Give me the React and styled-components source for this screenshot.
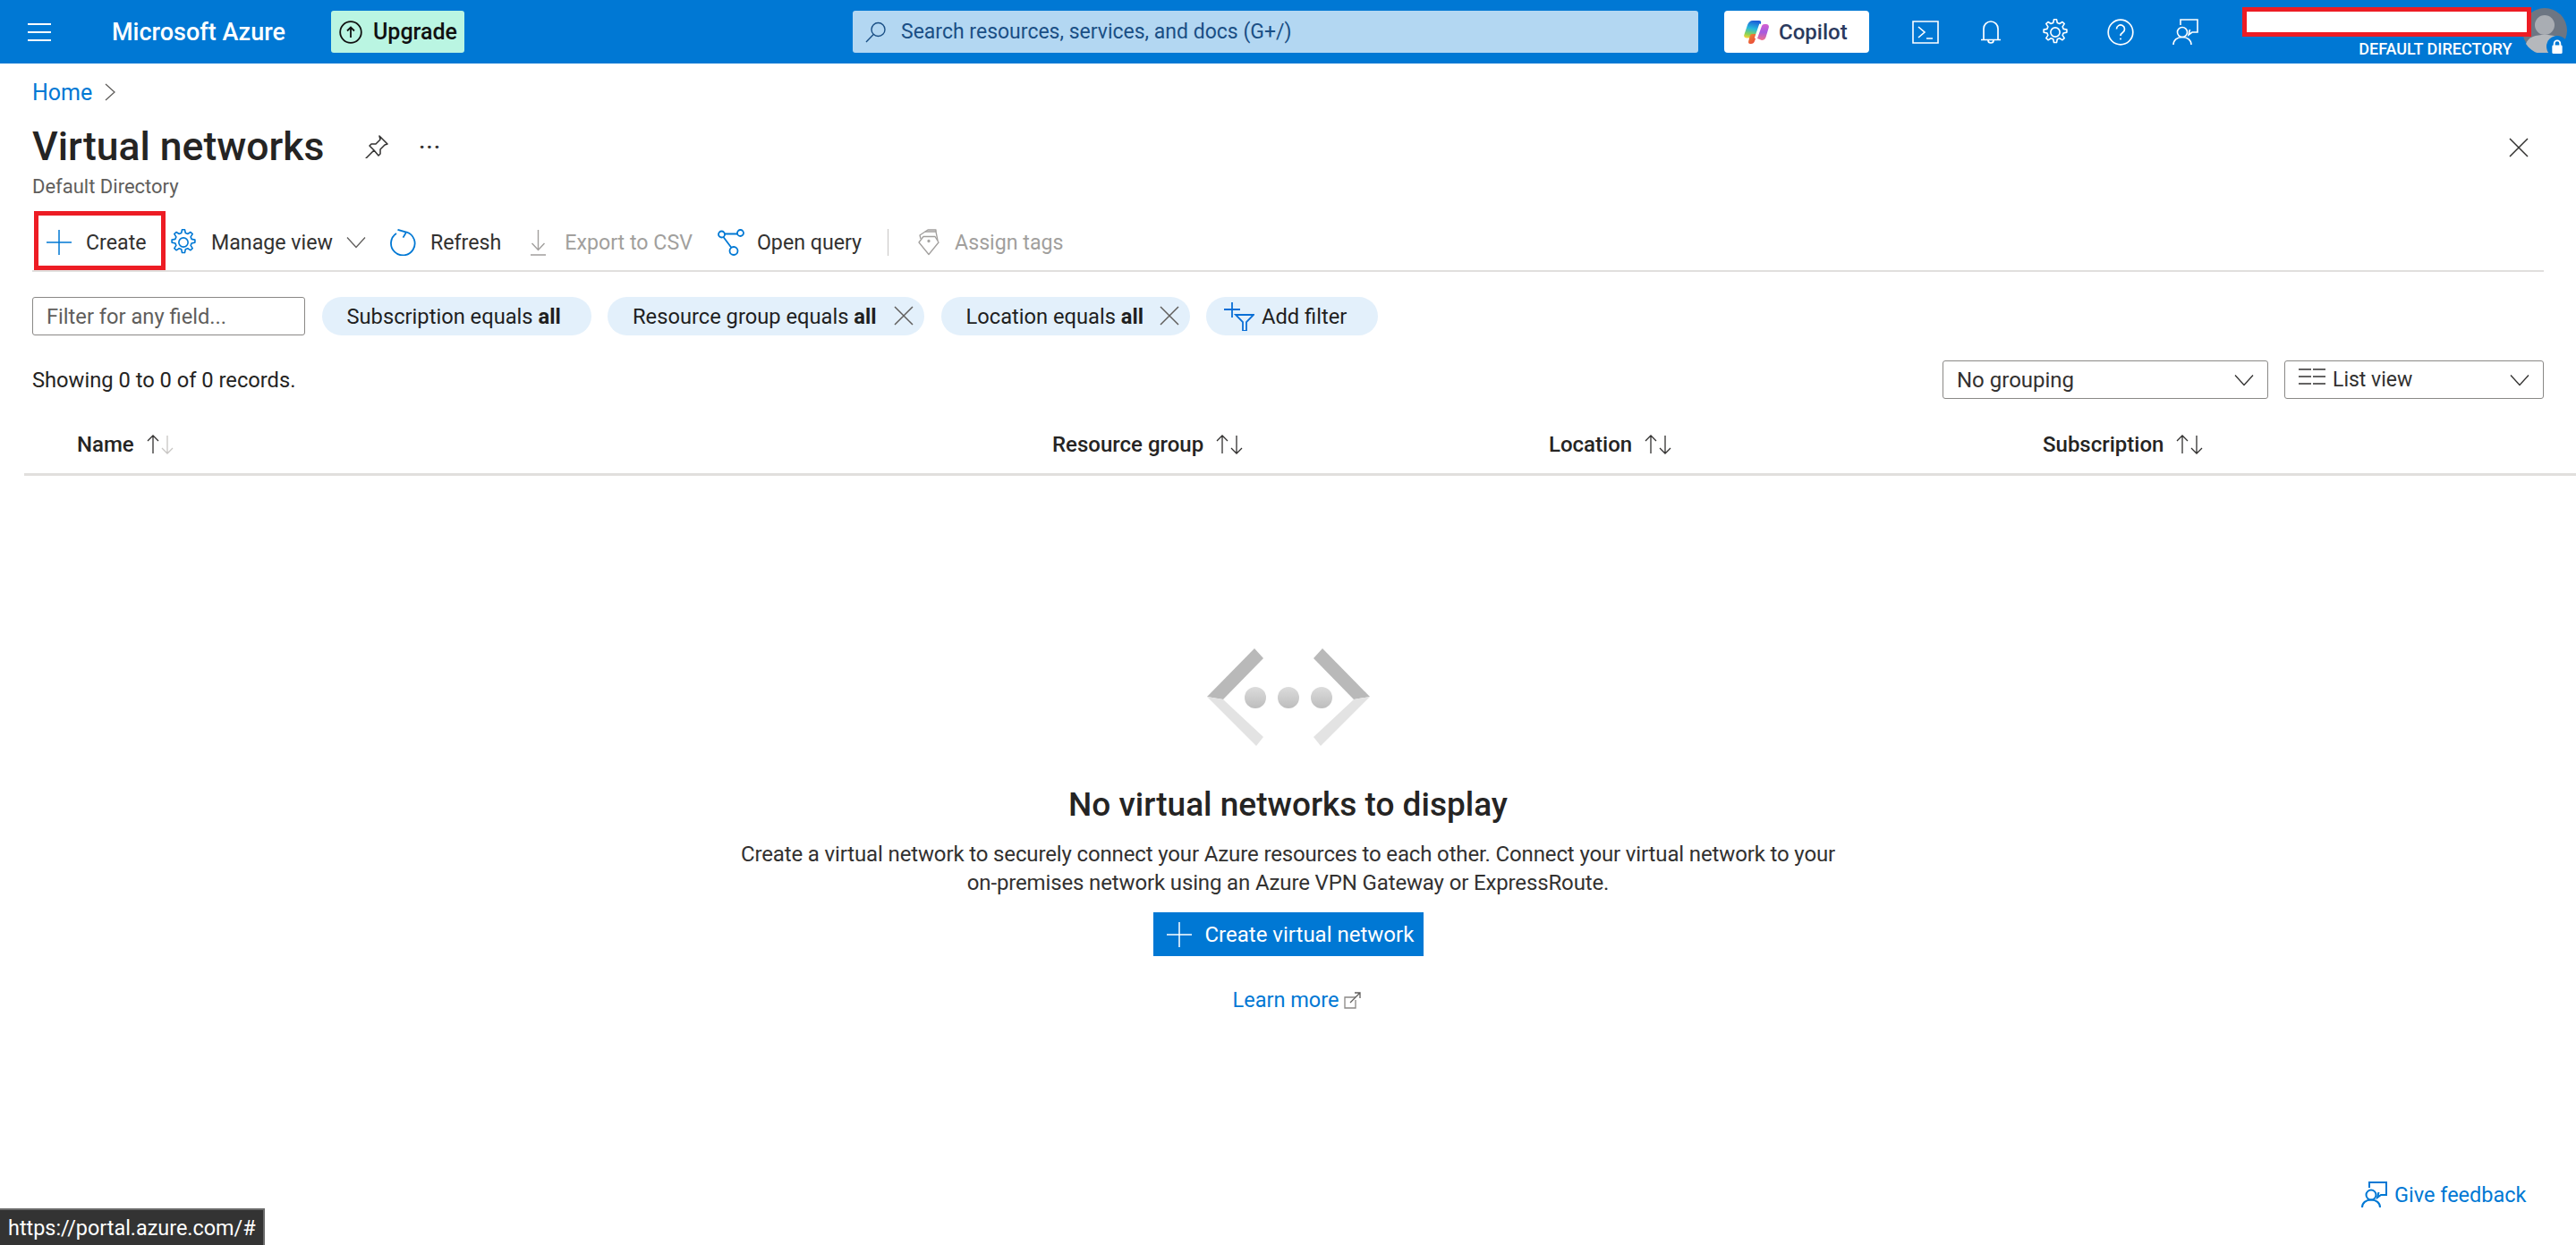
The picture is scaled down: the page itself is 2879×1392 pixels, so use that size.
import React from 'react';
import styled, {createGlobalStyle} from 'styled-components';

const FONT = 'Roboto, "Open Sans", "Liberation Sans", sans-serif';

const GlobalStyle = createGlobalStyle`
	html, body {
		margin: 0;
		padding: 0;
		background: #fff;
	}
	body {
		font-family: ${FONT};
		color: #323130;
	}
	* {
		box-sizing: border-box;
	}
`

function Line({children, w = 29, h = 29, box = 24, ...rest}) {
	return (
		<svg width={w} height={h} viewBox={`0 0 ${box} ${box}`} fill="none" stroke="currentColor" strokeWidth="1.2" {...rest}>
			{children}
		</svg>
	)
}

const Hamburger = () => (
	<Line w={28} h={28} box={28} strokeWidth="2.2"><path d="M1 5h26M1 14h26M1 23h26" /></Line>
)
const UpgradeIcon = () => (
	<Line w={26} h={26} box={26} strokeWidth="1.8"><circle cx="13" cy="13" r="11.8" /><path d="M13 19V8M9 11.5 13 7.5l4 4" /></Line>
)
const SearchIcon = () => (
	<Line w={24} h={24} box={24} strokeWidth="1.4"><circle cx="14.5" cy="9" r="7.5" /><path d="M9.2 14.5 1 23" /></Line>
)
const TerminalIcon = () => (
	<Line w={30} h={26} box={30} viewBox="0 0 30 26" strokeWidth="1.6"><path d="M1 1h28v24H1z" /><path d="M7 7l7 6-7 6M16 20h7" /></Line>
)
const BellIcon = () => (
	<Line w={24} h={28} viewBox="0 0 24 28" strokeWidth="1.7"><path d="M4 22V10a8 8 0 0 1 16 0v12M1 22.500h22M9 23a3 3 0 0 0 6 0" /></Line>
)
const GearPath = 'M12.700 1.500h2.600l.7 3.300 2.200.9 2.800-1.800 1.900 1.900-1.800 2.800.9 2.200 3.300.7v2.600l-3.300.7-.9 2.200 1.800 2.800-1.900 1.900-2.800-1.800-2.200.9-.7 3.300h-2.600l-.7-3.300-2.200-.9-2.800 1.800-1.900-1.900 1.800-2.800-.9-2.200-3.300-.7v-2.600l3.300-.7.9-2.200-1.800-2.800 1.900-1.900 2.800 1.800 2.200-.9z'
const GearIcon = ({size = 32}) => (
	<Line w={size} h={size} box={28} strokeWidth="1.4" strokeLinejoin="round"><path d={GearPath} /><circle cx="14" cy="14" r="4.500" /></Line>
)
const HelpIcon = () => (
	<Line w={30} h={30} box={30} strokeWidth="1.7"><circle cx="15" cy="15" r="13.800" /><path d="M10.500 11.500a4.500 4.500 0 1 1 7 3.700c-1.700 1.100-2.500 2-2.500 3.800" /><circle cx="15" cy="22.500" r="1" fill="currentColor" stroke="none" /></Line>
)
const FeedbackIcon = ({size = 29, weight = 1.6}) => (
	<Line w={size} h={size} box={29} strokeWidth={weight}><path d="M9 7V1h19v14h-6l-4 3 1.500-6" /><circle cx="11" cy="15" r="5.500" /><path d="M1 29c0-5 4-8.500 10-8.500S21 24 21 29" /></Line>
)
const PlusIcon = ({size = 28}) => (
	<Line w={size} h={size} box={28} strokeWidth="1.5"><path d="M14 0v28M0 14h28" /></Line>
)
const ChevronIcon = ({w = 22, h = 14}) => (
	<Line w={w} h={h} viewBox="0 0 22 14" strokeWidth="1.300"><path d="M1 1.500 11 12.500 21 1.500" /></Line>
)
const RefreshIcon = () => (
	<Line w={29} h={30} viewBox="0 0 29 30" strokeWidth="1.800"><path d="M18.500 3.500A13.300 13.300 0 1 1 7 5" /><path d="M8.500 0.800 18 3.600l-3.500 6" /></Line>
)
const ExportIcon = () => (
	<Line w={19} h={29} viewBox="0 0 19 29" strokeWidth="1.400"><path d="M9.500 0v22M2.500 15l7 7.500 7-7.500M1 28h17" /></Line>
)
const QueryIcon = () => (
	<Line w={30} h={30} box={30} strokeWidth="1.800"><circle cx="4.500" cy="6" r="3.500" /><circle cx="25.500" cy="4.500" r="3.500" /><circle cx="18" cy="24.500" r="4.500" /><path d="M8 5.500h14M6.500 9l9 12" /></Line>
)
const TagsIcon = () => (
	<Line w={24} h={30} viewBox="0 0 24 30" strokeWidth="1.300" strokeLinejoin="round">
		<path d="M1 15 12 28.500 23 15l-4-6.500H6z" />
		<path d="M3 11 2 7l6-4h12l2 10" />
		<path d="M8 3l3-2h9v2" />
		<circle cx="12" cy="13.500" r="1" />
	</Line>
)
const CloseIcon = ({size = 22}) => (
	<Line w={size} h={size} box={22} strokeWidth="1.500"><path d="M1 1l20 20M21 1 1 21" /></Line>
)
const PinIcon = () => (
	<Line w={26} h={26} box={26} strokeWidth="1.500" strokeLinejoin="round"><path d="M16 1l9 9-3 1-5 5 0 5-2 2-5-6-9 9 9-9-5-5 2-2h5l5-5z" /></Line>
)
const FilterAddIcon = () => (
	<svg width="34" height="32" viewBox="0 0 34 32" fill="none" stroke="#0a6fd6" strokeWidth="1.800">
		<path d="M9 0v17M0 8h18" />
		<path d="M13 14h20l-8 8v10h-4V22z" />
	</svg>
)
const ListIcon = () => (
	<svg width="30" height="18" viewBox="0 0 30 18" fill="none" stroke="#323130" strokeWidth="1.400">
		<path d="M0 1h14M16 1h14M0 9h14M16 9h14M0 17h14M16 17h14" />
	</svg>
)
const SortIcon = ({dim}) => (
	<svg width="30" height="24" viewBox="0 0 30 24" fill="none" strokeWidth="1.300">
		<path d="M7 22V2M1 8l6-6 6 6" stroke="#323130" />
		<path d="M23 2v20M17 16l6 6 6-6" stroke={dim ? '#c8c6c4' : '#323130'} />
	</svg>
)
const ExternalIcon = () => (
	<svg width="19" height="19" viewBox="0 0 19 19" fill="none" stroke="#8a8886" strokeWidth="1.300">
		<path d="M13 6H1v12h12V9" />
		<path d="M7 12 18 1M12 1h6v6" stroke="#605e5c" />
	</svg>
)
const CopilotIcon = () => (
	<svg width="28" height="26" viewBox="0 0 28 26">
		<defs>
			<linearGradient id="cpA" x1="0.500" y1="0" x2="0.300" y2="1">
				<stop offset="0" stopColor="#1b5fd8" />
				<stop offset="0.450" stopColor="#27b9dc" />
				<stop offset="0.800" stopColor="#8dd353" />
				<stop offset="1" stopColor="#f4d23a" />
			</linearGradient>
			<linearGradient id="cpB" x1="0.500" y1="0" x2="0.500" y2="1">
				<stop offset="0" stopColor="#d55fd0" />
				<stop offset="0.500" stopColor="#a55be0" />
				<stop offset="1" stopColor="#f0708a" />
			</linearGradient>
			<linearGradient id="cpC" x1="0" y1="0" x2="0.800" y2="1">
				<stop offset="0" stopColor="#f08a30" />
				<stop offset="1" stopColor="#e8413c" />
			</linearGradient>
		</defs>
		<path d="M10 0h7c2 0 2.500 1.500 2 3l-5 14c-.6 1.800-1.500 2.500-3 2.500H3c-2 0-3.300-1.500-2.700-3.500l3.700-11C5 2 7 0 10 0z" fill="url(#cpA)" />
		<path d="M15 20 20 6c.5-1.300 1.500-2 3-2h2c2 0 3.400 1.700 2.800 3.700l-3.300 11c-.8 2.300-2.500 3.300-4.500 3.300z" fill="url(#cpB)" />
		<path d="M9 15h6l-3 8c-.6 2-2 3-4 3H7c-1.500 0-2.300-1.300-1.800-3l1.300-5c.5-2 1.300-3 2.500-3z" fill="url(#cpC)" />
		<path d="M18.500 4 13 20" stroke="#fff" strokeWidth="2.500" fill="none" />
	</svg>
)
const EmptyIcon = () => (
	<svg width="182" height="109" viewBox="0 0 182 109">
		<defs>
			<linearGradient id="dotFill" x1="0" y1="0" x2="0" y2="1">
				<stop offset="0" stopColor="#dcdcdc" />
				<stop offset="1" stopColor="#bdbdbd" />
			</linearGradient>
		</defs>
		<path d="M53 0 63 11 18 57 0 54z" fill="#b9b9b9" />
		<path d="M129 0 119 11 164 57 182 54z" fill="#b9b9b9" />
		<path d="M0 54 18 57 63 99 55 109z" fill="#e3e3e3" />
		<path d="M182 54 164 57 119 99 127 109z" fill="#e3e3e3" />
		<ellipse cx="54" cy="55" rx="12" ry="12" fill="url(#dotFill)" />
		<ellipse cx="91" cy="55" rx="12" ry="12" fill="url(#dotFill)" />
		<ellipse cx="128" cy="55" rx="12" ry="12" fill="url(#dotFill)" />
	</svg>
)

function App() {
	return (
		<Page>
			<GlobalStyle />
			<TopBar>
				<TopLeft>
					<MenuButton><Hamburger /></MenuButton>
					<Brand>Microsoft Azure</Brand>
					<UpgradeButton><UpgradeIcon />Upgrade</UpgradeButton>
				</TopLeft>
				<SearchBox><SearchIcon /><span>Search resources, services, and docs (G+/)</span></SearchBox>
				<CopilotButton><CopilotIcon />Copilot</CopilotButton>
				<TopIcons>
					<TopIcon><TerminalIcon /></TopIcon>
					<TopIcon><BellIcon /></TopIcon>
					<TopIcon><GearIcon /></TopIcon>
					<TopIcon><HelpIcon /></TopIcon>
					<TopIcon><FeedbackIcon /></TopIcon>
				</TopIcons>
				<Account>
					<AccountText>
						<RedactBox />
						<DirectoryName>DEFAULT DIRECTORY</DirectoryName>
					</AccountText>
					<Avatar>
						<svg width="50" height="50" viewBox="0 0 50 50">
							<circle cx="25" cy="25" r="25" fill="#6d7683" />
							<circle cx="25" cy="19" r="11" fill="#a9adb3" />
							<path d="M4 40c3-8 11-10 21-10s18 2 21 10a25 25 0 0 1-42 0z" fill="#b5b8bc" />
						</svg>
						<LockBadge>
							<svg width="14" height="17" viewBox="0 0 14 18" fill="#fff">
								<path d="M3.500 8V5a3.500 3.500 0 0 1 7 0v3" fill="none" stroke="#fff" strokeWidth="2" />
								<rect x="1" y="7" width="12" height="10" rx="1.500" />
							</svg>
						</LockBadge>
					</Avatar>
				</Account>
			</TopBar>

			<Content>
				<Breadcrumb>
					<HomeLink>Home</HomeLink>
					<svg width="12" height="20" viewBox="0 0 12 20" fill="none" stroke="#605e5c" strokeWidth="1.300"><path d="M1 1l10 9-10 9" /></svg>
				</Breadcrumb>

				<TitleRow>
					<Title>Virtual networks</Title>
					<PinButton><PinIcon /></PinButton>
					<Dots>···</Dots>
					<CloseButton><CloseIcon /></CloseButton>
				</TitleRow>
				<SubTitle>Default Directory</SubTitle>

				<Toolbar>
					<CreateAction><Blue><PlusIcon /></Blue>Create</CreateAction>
					<Action $gap={15} $left={4}><Blue><GearIcon /></Blue>Manage view<ChevWrap><ChevronIcon /></ChevWrap></Action>
					<Action $gap={16} $left={27}><Blue><RefreshIcon /></Blue>Refresh</Action>
					<Action $gap={20} $left={32} $disabled><ExportIcon />Export to CSV</Action>
					<Action $gap={14} $left={28}><Blue><QueryIcon /></Blue>Open query</Action>
					<ToolSep />
					<Action $gap={17} $left={33} $disabled><TagsIcon />Assign tags</Action>
				</Toolbar>

				<FilterRow>
					<FilterInput>Filter for any field...</FilterInput>
					<Pill $w={301}>Subscription equals&nbsp;<b>all</b></Pill>
					<Pill $w={354}>Resource group equals&nbsp;<b>all</b><PillClose><CloseIcon /></PillClose></Pill>
					<Pill $w={278}>Location equals&nbsp;<b>all</b><PillClose><CloseIcon /></PillClose></Pill>
					<AddPill><FilterAddIcon />Add filter</AddPill>
				</FilterRow>

				<SummaryRow>
					<Records>Showing 0 to 0 of 0 records.</Records>
					<Selects>
						<Select $w={364}><span>No grouping</span><ChevronIcon w={24} h={14} /></Select>
						<Select $w={290}><SelectLabel><ListSlot><ListIcon /></ListSlot>List view</SelectLabel><ChevronIcon w={24} h={14} /></Select>
					</Selects>
				</SummaryRow>

				<TableHead>
					<HeadCell $w={1149} $pad={59}>Name<SortIcon dim /></HeadCell>
					<HeadCell $w={555}>Resource group<SortIcon /></HeadCell>
					<HeadCell $w={552}>Location<SortIcon /></HeadCell>
					<HeadCell>Subscription<SortIcon /></HeadCell>
				</TableHead>

				<EmptyState>
					<EmptyIcon />
					<EmptyTitle>No virtual networks to display</EmptyTitle>
					<EmptyText>
						Create a virtual network to securely connect your Azure resources to each other. Connect your virtual network to your<br />
						on-premises network using an Azure VPN Gateway or ExpressRoute.
					</EmptyText>
					<PrimaryButton><PlusIcon />Create virtual network</PrimaryButton>
					<LearnMore>Learn more<ExternalIcon /></LearnMore>
				</EmptyState>
			</Content>

			<Feedback><FeedbackIcon weight={2} />Give feedback</Feedback>
			<StatusBubble>https://portal.azure.com/#</StatusBubble>
		</Page>
	)
}

export default App

const Page = styled.div`
	position: relative;
	width: 2879px;
	height: 1392px;
	overflow: hidden;
	background: #fff;
	font-size: 24px;
`

const TopBar = styled.header`
	height: 71px;
	background: #0078d4;
	display: flex;
	align-items: center;
	color: #fff;
`

const TopLeft = styled.div`
	display: flex;
	align-items: center;
	width: 953px;
	padding-left: 30px;
`

const MenuButton = styled.div`
	display: flex;
	width: 95px;
`

const Brand = styled.div`
	font-size: 27px;
	font-weight: 500;
	width: 245px;
	white-space: nowrap;
`

const UpgradeButton = styled.div`
	width: 149px;
	height: 47px;
	background: #baf5e2;
	border-radius: 3px;
	color: #111;
	font-size: 25px;
	font-weight: 500;
	display: flex;
	align-items: center;
	gap: 12px;
	padding-left: 9px;
	white-space: nowrap;
`

const SearchBox = styled.div`
	width: 945px;
	height: 47px;
	background: #b3d7f2;
	border-radius: 3px;
	color: #1a4f85;
	font-size: 23px;
	display: flex;
	align-items: center;
	gap: 16px;
	padding-left: 14px;
	white-space: nowrap;
`

const CopilotButton = styled.div`
	margin-left: 29px;
	width: 162px;
	height: 47px;
	background: #fff;
	border-radius: 4px;
	color: #2b3a5e;
	font-size: 24px;
	font-weight: 500;
	display: flex;
	align-items: center;
	gap: 11px;
	padding-left: 22px;
`

const TopIcons = styled.div`
	display: flex;
	margin-left: 27px;
`

const TopIcon = styled.div`
	width: 72.500px;
	height: 71px;
	display: flex;
	align-items: center;
	justify-content: center;
`

const Account = styled.div`
	position: relative;
	flex: 1;
	height: 71px;
	display: flex;
	margin-left: 27px;
`

const AccountText = styled.div`
	width: 323px;
	display: flex;
	flex-direction: column;
	align-items: flex-end;
	padding-top: 8px;
`

const RedactBox = styled.div`
	width: 323px;
	height: 33px;
	background: #fff;
	border: 5px solid #ed1c24;
	position: relative;
	z-index: 1;
`

const DirectoryName = styled.div`
	font-size: 18px;
	font-weight: 500;
	line-height: 22px;
	margin: 3px 21px 0 0;
	white-space: nowrap;
`

const Avatar = styled.div`
	position: absolute;
	left: 313px;
	top: 9px;
	width: 50px;
	height: 50px;
`

const LockBadge = styled.div`
	position: absolute;
	left: 27px;
	top: 31px;
	width: 24px;
	height: 24px;
	background: #0078d4;
	border-radius: 50%;
	display: flex;
	align-items: center;
	justify-content: center;
`

const Content = styled.main`
	padding: 0 36px;
`

const Breadcrumb = styled.div`
	display: flex;
	align-items: center;
	gap: 14px;
	height: 30px;
	margin-top: 17px;
`

const HomeLink = styled.a`
	color: #0078d4;
	font-size: 25px;
`

const TitleRow = styled.div`
	display: flex;
	align-items: center;
	height: 60px;
	margin-top: 16px;
`

const Title = styled.h1`
	margin: 0;
	font-size: 44.500px;
	font-weight: 500;
	width: 372px;
	color: #252423;
	white-space: nowrap;
`

const PinButton = styled.div`
	display: flex;
	width: 60px;
	color: #323130;
`

const Dots = styled.div`
	font-size: 26px;
	letter-spacing: 1px;
	color: #323130;
	font-weight: 500;
`

const CloseButton = styled.div`
	display: flex;
	margin-left: auto;
	margin-right: 17px;
	margin-top: 2px;
	color: #323130;
`

const SubTitle = styled.div`
	font-size: 22px;
	color: #605e5c;
	line-height: 28px;
	margin-top: 1px;
`

const Toolbar = styled.div`
	display: flex;
	align-items: center;
	height: 69px;
	margin-top: 12px;
	border-bottom: 2px solid #e1dfdd;
	font-size: 23.200px;
	white-space: nowrap;
`

const Blue = styled.span`
	display: flex;
	color: #0078d4;
`

const CreateAction = styled.div`
	width: 147px;
	height: 66px;
	margin-left: 2px;
	border: 5px solid #ed1c24;
	display: flex;
	align-items: center;
	gap: 16px;
	padding: 5px 0 0 9px;
	color: #323130;
`

const Action = styled.div`
	display: flex;
	align-items: center;
	gap: ${props => props.$gap}px;
	margin-left: ${props => props.$left}px;
	padding-top: 5px;
	color: ${props => props.$disabled ? '#a19f9d' : '#323130'};
`

const ChevWrap = styled.span`
	display: flex;
	color: #605e5c;
`

const ToolSep = styled.div`
	width: 1px;
	height: 30px;
	background: #c8c6c4;
	margin: 5px 0 0 29px;
`

const FilterRow = styled.div`
	display: flex;
	align-items: center;
	gap: 18.500px;
	margin-top: 28px;
	height: 43px;
	font-size: 23.700px;
	white-space: nowrap;
`

const FilterInput = styled.div`
	width: 305px;
	height: 43px;
	border: 1.500px solid #8a8886;
	border-radius: 3px;
	padding-left: 15px;
	color: #605e5c;
	display: flex;
	align-items: center;
`

const Pill = styled.div`
	width: ${props => props.$w}px;
	height: 43px;
	background: #e3f0fb;
	border-radius: 22px;
	padding-left: 28px;
	display: flex;
	align-items: center;
	color: #1f1f1f;
	position: relative;
	b {
		font-weight: 700;
	}
`

const PillClose = styled.span`
	display: flex;
	position: absolute;
	right: 12px;
	top: 10px;
	color: #605e5c;
`

const AddPill = styled.div`
	width: 192px;
	height: 43px;
	background: #e3f0fb;
	border-radius: 22px;
	padding-left: 20px;
	display: flex;
	align-items: center;
	gap: 8px;
	color: #1f1f1f;
`

const SummaryRow = styled.div`
	display: flex;
	align-items: center;
	justify-content: space-between;
	height: 43px;
	margin-top: 28px;
`

const Records = styled.div`
	font-size: 23.700px;
	color: #252423;
`

const Selects = styled.div`
	display: flex;
	gap: 18px;
`

const Select = styled.div`
	width: ${props => props.$w}px;
	height: 43px;
	border: 1.500px solid #8a8886;
	border-radius: 3px;
	padding: 0 14px 0 15px;
	display: flex;
	align-items: center;
	justify-content: space-between;
	color: #323130;
`

const SelectLabel = styled.span`
	display: flex;
	align-items: center;
	gap: 8px;
	font-size: 23px;
`

const ListSlot = styled.span`
	display: flex;
	margin-top: -8px;
`

const TableHead = styled.div`
	display: flex;
	align-items: center;
	height: 68px;
	margin: 18px -36px 0 -9px;
	border-bottom: 3px solid #e1dfdd;
`

const HeadCell = styled.div`
	width: ${props => props.$w ? props.$w + 'px' : 'auto'};
	padding-left: ${props => props.$pad || 0}px;
	display: flex;
	align-items: center;
	gap: 14px;
	font-weight: 500;
	color: #252423;
	white-space: nowrap;
`

const EmptyState = styled.section`
	display: flex;
	flex-direction: column;
	align-items: center;
	padding-top: 193px;
`

const EmptyTitle = styled.h2`
	margin: 41px 0 0;
	font-size: 37px;
	font-weight: 500;
	line-height: 50px;
	color: #252423;
`

const EmptyText = styled.p`
	margin: 14px 0 0;
	text-align: center;
	font-size: 24px;
	letter-spacing: -0.140px;
	line-height: 32px;
	color: #323130;
	white-space: nowrap;
`

const PrimaryButton = styled.div`
	margin-top: 17px;
	width: 302px;
	height: 49px;
	background: #0078d4;
	color: #fff;
	display: flex;
	align-items: center;
	gap: 15px;
	padding-left: 15px;
	white-space: nowrap;
`

const LearnMore = styled.a`
	margin-top: 33px;
	padding-left: 20px;
	color: #0078d4;
	font-size: 23.500px;
	display: flex;
	align-items: center;
	gap: 6px;
	line-height: 32px;
`

const Feedback = styled.div`
	position: absolute;
	left: 2639px;
	top: 1321px;
	display: flex;
	align-items: center;
	gap: 8px;
	color: #0078d4;
	font-size: 23.500px;
	white-space: nowrap;
`

const StatusBubble = styled.div`
	position: absolute;
	left: 0;
	bottom: 0;
	width: 296px;
	height: 41px;
	padding-left: 9px;
	background: #333;
	border-top: 2px solid #6a6a6a;
	border-right: 2px solid #6a6a6a;
	color: #fff;
	font-size: 23.400px;
	display: flex;
	align-items: center;
	white-space: nowrap;
`
